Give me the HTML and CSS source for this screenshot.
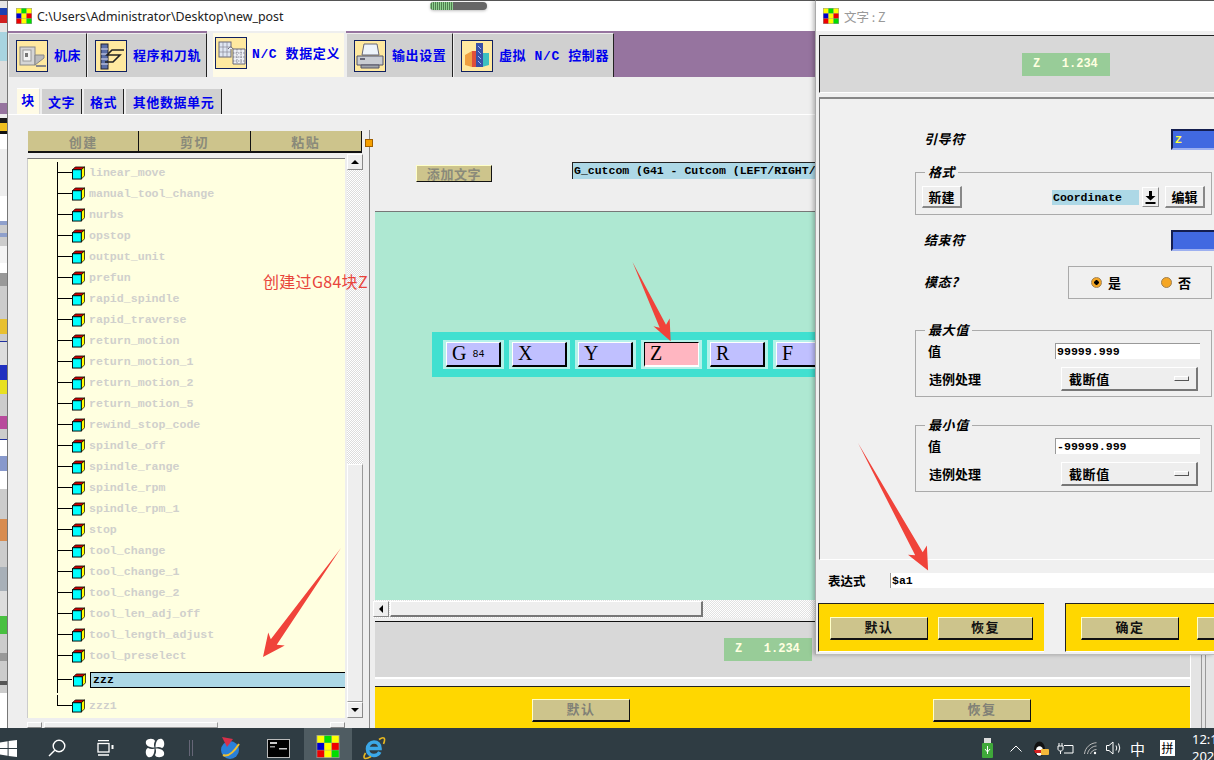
FILE: index.html
```html
<!DOCTYPE html>
<html lang="zh">

<head>
    <meta charset="UTF-8">
    <title>new_post</title>
    <link rel="stylesheet" href="styles.css">
</head>

<body>
    <svg class="defs" width="0" height="0">
        <symbol id="logo" viewBox="0 0 15 15">
            <rect width="15" height="15" fill="#999" />
            <rect x="0.5" y="0.5" width="4.5" height="4.5" fill="#ff0" />
            <rect x="5.2" y="0.5" width="4.5" height="4.5" fill="#0d0" />
            <rect x="10" y="0.5" width="4.5" height="4.5" fill="#ff0" />
            <rect x="0.5" y="5.2" width="4.5" height="4.5" fill="#00c" />
            <rect x="5.2" y="5.2" width="4.5" height="4.5" fill="#ff0" />
            <rect x="10" y="5.2" width="4.5" height="4.5" fill="#e00" />
            <rect x="0.5" y="10" width="4.5" height="4.5" fill="#e00" />
            <rect x="5.2" y="10" width="4.5" height="4.5" fill="#ff0" />
            <rect x="10" y="10" width="4.5" height="4.5" fill="#0d0" />
        </symbol>
        <symbol id="cube" viewBox="0 0 14 14">
            <path d="M0.5 3.5 L3.5 0.5 H13.5 L10 3.5 Z" fill="#c00" stroke="#000" stroke-width="0.8" />
            <path d="M10 3.5 L13.5 0.5 V10 L10 13.5 Z" fill="#ff0" stroke="#000" stroke-width="0.8" />
            <rect x="0.5" y="3.5" width="9.5" height="10" fill="#0ff" stroke="#000" />
        </symbol>
    </svg>

    <div class="desktop">
        <div class="strip"></div>

        <div class="main-window">
            <div class="titlebar">
                <svg class="title-logo"><use href="#logo" /></svg>
                <span class="title-text">C:\Users\Administrator\Desktop\new_post</span>
            </div>

            <div class="tabs">
                <div class="tab">
                    <svg class="tab-icon" viewBox="0 0 30 30">
                        <rect x="3" y="6" width="15" height="18" fill="#d5d5d5" stroke="#888" />
                        <rect x="6" y="9" width="8" height="11" fill="#f4f4f4" stroke="#999" />
                        <rect x="8" y="12" width="3" height="4" fill="#777" />
                        <path d="M18 14 L27 14 L27 17 L18 24 Z" fill="#bbb" stroke="#888" />
                        <path d="M19 25 H29" stroke="#888" stroke-width="2" />
                    </svg>
                    <span>机床</span>
                </div>
                <div class="tab">
                    <svg class="tab-icon" viewBox="0 0 30 30">
                        <rect x="5" y="3" width="7" height="25" fill="#5a6ea8" stroke="#223" />
                        <path d="M5 8 H12 M5 13 H12 M5 18 H12 M5 23 H12" stroke="#dde" />
                        <path d="M28 9 H16 L11 14 H24 L17 21 H9" fill="none" stroke="#222" stroke-width="1.6" />
                    </svg>
                    <span>程序和刀轨</span>
                </div>
                <div class="tab tab-active">
                    <svg class="tab-icon" viewBox="0 0 30 30">
                        <rect x="3" y="4" width="12" height="15" fill="#dfe6f2" stroke="#667" />
                        <path d="M3 9 H15 M3 14 H15 M7 4 V19 M11 4 V19" stroke="#889" stroke-width="0.7" />
                        <path d="M12 11 Q15 7 17 11 V26 H29 V11 H17" fill="#eef0f6" stroke="#667" />
                        <path d="M17 15 H29 M17 19 H29 M17 23 H29 M21 11 V26 M25 11 V26" stroke="#667" stroke-width="0.7" stroke-dasharray="1.5 1" />
                    </svg>
                    <span>N/C 数据定义</span>
                </div>
                <div class="tab">
                    <svg class="tab-icon" viewBox="0 0 30 30">
                        <path d="M9 3 H22 L24 14 H7 Z" fill="#eef4fa" stroke="#667" />
                        <path d="M2 15 H28 V24 H2 Z" fill="#c9ccd2" stroke="#556" />
                        <path d="M6 24 H24 V27 H6 Z" fill="#9fa3aa" stroke="#556" />
                        <rect x="5" y="17" width="5" height="2" fill="#667" />
                    </svg>
                    <span>输出设置</span>
                </div>
                <div class="tab">
                    <svg class="tab-icon" viewBox="0 0 30 30">
                        <path d="M3 14 L10 10 V26 L3 24 Z" fill="#f0a040" />
                        <path d="M10 10 H16 V26 H10 Z" fill="#e0503a" />
                        <path d="M20 12 L27 12 V24 L20 26 Z" fill="#3cc0c0" />
                        <rect x="14" y="2" width="7" height="24" fill="#3850a8" />
                        <path d="M16 5 L19 8 M16 10 L19 13 M16 15 L19 18 M16 20 L19 23" stroke="#9fb4ff" />
                    </svg>
                    <span>虚拟 N/C 控制器</span>
                </div>
            </div>

            <div class="win-body">
                <div class="subtabs">
                    <div class="subtab subtab-active">块</div>
                    <div class="subtab w40">文字</div>
                    <div class="subtab w40">格式</div>
                    <div class="subtab w96">其他数据单元</div>
                </div>

                <div class="workspace">
                    <div class="left-col">
                        <div class="tree-buttons">
                            <div class="khaki-btn">创建</div>
                            <div class="khaki-btn">剪切</div>
                            <div class="khaki-btn">粘贴</div>
                        </div>
                        <div class="tree-wrap">
                            <div class="tree">
                                <ul class="tree-list">
                                    <li class="tree-row"><svg class="cube"><use href="#cube" /></svg><span>linear_move</span></li>
                                    <li class="tree-row"><svg class="cube"><use href="#cube" /></svg><span>manual_tool_change</span></li>
                                    <li class="tree-row"><svg class="cube"><use href="#cube" /></svg><span>nurbs</span></li>
                                    <li class="tree-row"><svg class="cube"><use href="#cube" /></svg><span>opstop</span></li>
                                    <li class="tree-row"><svg class="cube"><use href="#cube" /></svg><span>output_unit</span></li>
                                    <li class="tree-row"><svg class="cube"><use href="#cube" /></svg><span>prefun</span></li>
                                    <li class="tree-row"><svg class="cube"><use href="#cube" /></svg><span>rapid_spindle</span></li>
                                    <li class="tree-row"><svg class="cube"><use href="#cube" /></svg><span>rapid_traverse</span></li>
                                    <li class="tree-row"><svg class="cube"><use href="#cube" /></svg><span>return_motion</span></li>
                                    <li class="tree-row"><svg class="cube"><use href="#cube" /></svg><span>return_motion_1</span></li>
                                    <li class="tree-row"><svg class="cube"><use href="#cube" /></svg><span>return_motion_2</span></li>
                                    <li class="tree-row"><svg class="cube"><use href="#cube" /></svg><span>return_motion_5</span></li>
                                    <li class="tree-row"><svg class="cube"><use href="#cube" /></svg><span>rewind_stop_code</span></li>
                                    <li class="tree-row"><svg class="cube"><use href="#cube" /></svg><span>spindle_off</span></li>
                                    <li class="tree-row"><svg class="cube"><use href="#cube" /></svg><span>spindle_range</span></li>
                                    <li class="tree-row"><svg class="cube"><use href="#cube" /></svg><span>spindle_rpm</span></li>
                                    <li class="tree-row"><svg class="cube"><use href="#cube" /></svg><span>spindle_rpm_1</span></li>
                                    <li class="tree-row"><svg class="cube"><use href="#cube" /></svg><span>stop</span></li>
                                    <li class="tree-row"><svg class="cube"><use href="#cube" /></svg><span>tool_change</span></li>
                                    <li class="tree-row"><svg class="cube"><use href="#cube" /></svg><span>tool_change_1</span></li>
                                    <li class="tree-row"><svg class="cube"><use href="#cube" /></svg><span>tool_change_2</span></li>
                                    <li class="tree-row"><svg class="cube"><use href="#cube" /></svg><span>tool_len_adj_off</span></li>
                                    <li class="tree-row"><svg class="cube"><use href="#cube" /></svg><span>tool_length_adjust</span></li>
                                    <li class="tree-row"><svg class="cube"><use href="#cube" /></svg><span>tool_preselect</span></li>
                                    <li class="tree-row tree-selected"><svg class="cube"><use href="#cube" /></svg><span>zzz</span></li>
                                    <li class="tree-row tree-last"><svg class="cube"><use href="#cube" /></svg><span>zzz1</span></li>
                                </ul>
                            </div>
                            <div class="vscroll">
                                <div class="scroll-btn"><i class="arrow-up"></i></div>
                                <div class="vscroll-track"></div>
                                <div class="vscroll-thumb"></div>
                                <div class="scroll-btn"><i class="arrow-down"></i></div>
                            </div>
                        </div>
                        <div class="tree-hscroll">
                            <div class="scroll-btn small"></div>
                            <div class="tree-hthumb"></div>
                            <div class="scroll-btn small"></div>
                        </div>
                    </div>

                    <div class="right-col">
                        <span class="sash-handle"></span>
                        <div class="tool-row">
                            <div class="add-word">添加文字</div>
                            <div class="block-desc">G_cutcom (G41 - Cutcom (LEFT/RIGHT/</div>
                        </div>
                        <div class="canvas">
                            <div class="block-bar">
                                <div class="cell"><div class="word">G<small>84</small></div></div>
                                <div class="cell"><div class="word">X</div></div>
                                <div class="cell"><div class="word">Y</div></div>
                                <div class="cell"><div class="word word-on">Z</div></div>
                                <div class="cell"><div class="word">R</div></div>
                                <div class="cell"><div class="word">F</div></div>
                            </div>
                        </div>
                        <div class="hscroll">
                            <div class="scroll-btn"><i class="arrow-left"></i></div>
                            <div class="hscroll-thumb"></div>
                        </div>
                        <div class="preview-main">
                            <div class="word-tag">Z   1.234</div>
                        </div>
                        <div class="yellow-main">
                            <div class="khaki-btn raised off">默认</div>
                            <div class="khaki-btn raised off">恢复</div>
                        </div>
                        <div class="edge"></div>
                    </div>
                </div>
            </div>
        </div>
    </div>

    <div class="taskbar">
        <div class="tb-cell tb-start">
            <svg width="17" height="17" viewBox="0 0 17 17" fill="#fff">
                <path d="M0 2.4 L7.6 1.2 V8 H0 Z M8.6 1 L17 0 V8 H8.6 Z M0 9 H7.6 V15.8 L0 14.6 Z M8.6 9 H17 V17 L8.6 16 Z" />
            </svg>
        </div>
        <div class="tb-cell">
            <svg width="18" height="18" viewBox="0 0 18 18" fill="none" stroke="#fff" stroke-width="1.4">
                <circle cx="11" cy="7" r="5.8" /><path d="M6.8 11.2 L1 17" />
            </svg>
        </div>
        <div class="tb-cell">
            <svg width="17" height="16" viewBox="0 0 17 16" fill="none" stroke="#fff" stroke-width="1.3">
                <rect x="1" y="3.5" width="11" height="8.5" /><path d="M1 0.7 H12 M1 15 H12" /><rect x="14.5" y="5" width="2" height="4" fill="#fff" stroke="none" />
            </svg>
        </div>
        <div class="tb-cell tb-fan">
            <svg width="20" height="20" viewBox="0 0 20 20" fill="#fff">
                <path d="M9.500 9.500 C3 9.500 0 7 1 3 C3 0 9 0 10 3 C9 5 8.500 7 9.500 9.500 Z" />
                <path d="M10.500 9.500 C10.500 3 13 0 17 1 C20 3 20 9 17 10 C15 9 13 8.500 10.500 9.500 Z" />
                <path d="M10.500 10.500 C17 10.500 20 13 19 17 C17 20 11 20 10 17 C11 15 11.500 13 10.500 10.500 Z" />
                <path d="M9.500 10.500 C9.500 17 7 20 3 19 C0 17 0 11 3 10 C5 11 7 11.500 9.500 10.500 Z" />
            </svg>
        </div>
        <div class="tb-sep"></div>
        <div class="tb-cell">
            <svg width="24" height="24" viewBox="0 0 24 24">
                <circle cx="12" cy="14" r="9" fill="#2a80d8" />
                <path d="M5 19 Q12 22 21 8" fill="none" stroke="#f0c030" stroke-width="2" />
                <path d="M4 1 L15 3 L9 11 Z" fill="#d8304a" />
            </svg>
        </div>
        <div class="tb-cell">
            <svg width="23" height="19" viewBox="0 0 23 19">
                <rect x="0.5" y="0.5" width="22" height="18" fill="#000" stroke="#bbb" />
                <rect x="3" y="3" width="7" height="2" fill="#ccc" /><rect x="12" y="9" width="8" height="1.5" fill="#ccc" /><rect x="3" y="7" width="5" height="1.5" fill="#999" />
            </svg>
        </div>
        <div class="tb-cell tb-active"><svg class="tb-logo"><use href="#logo" /></svg></div>
        <div class="tb-cell">
            <svg width="24" height="24" viewBox="0 0 24 24" fill="none">
                <path d="M6.500 12.500 H18 C18 8.500 15.500 6 12 6 C8.500 6 5.500 9 5.500 13 C5.500 17.500 8.500 19.500 12 19.500 C14.500 19.500 16.500 18.500 17.800 16" stroke="#3ba8e8" stroke-width="3.600" />
                <path d="M3.500 17 C0 23 3 24 9 20.500 M17 3.500 C22 0 24 2 21.500 8" stroke="#e8b820" stroke-width="1.600" />
            </svg>
        </div>

        <div class="tray">
            <svg class="tray-usb" width="11" height="20" viewBox="0 0 11 20">
                <rect x="2" y="0" width="7" height="5" fill="#ddd" /><rect y="5" width="11" height="15" rx="1" fill="#3fa83a" />
                <path d="M5.5 8 V16 M3 11 L5.5 14 L8 11" stroke="#fff" fill="none" />
            </svg>
            <svg class="tray-chevron" width="12" height="7" viewBox="0 0 12 7" fill="none" stroke="#fff"><path d="M0.5 6.5 L6 1 L11.5 6.5" /></svg>
            <svg class="tray-qq" width="16" height="17" viewBox="0 0 16 17">
                <ellipse cx="6.5" cy="9" rx="5.5" ry="7.5" fill="#111" />
                <ellipse cx="6.5" cy="11" rx="3.6" ry="4.8" fill="#fff" />
                <path d="M1 10 H11 L9 13 H2 Z" fill="#d42020" />
                <rect x="8" y="9" width="8" height="6" rx="1" fill="#f5b83a" />
            </svg>
            <svg class="tray-plug" width="17" height="13" viewBox="0 0 17 13" fill="none" stroke="#fff">
                <path d="M7 3.5 H16 V11 H7 M2 1 V4 M5 1 V4 M1 4 H6 V7 C6 8 5 9 3.500 9 C2 9 1 8 1 7 Z M3.500 9 V12" />
            </svg>
            <svg class="tray-wifi" width="13" height="13" viewBox="0 0 13 13" fill="none" stroke="#bbb">
                <path d="M0.500 12 C1 6 6 1 12.500 0.700 M3.500 12 C4 8 8 4 12.500 4 M6.500 12 C7 10 9 7.500 12.500 7.500" /><circle cx="11" cy="11" r="1.200" fill="#fff" stroke="none" />
            </svg>
            <svg class="tray-sound" width="17" height="14" viewBox="0 0 17 14" fill="none" stroke="#fff">
                <path d="M0.500 4.500 H3 L7 1 V13 L3 9.500 H0.500 Z M10 4.500 Q11.500 7 10 9.500 M12.500 2.500 Q15 7 12.500 11.500" />
            </svg>
            <span class="tray-ime">中</span>
            <span class="tray-pin">拼</span>
            <div class="clock"><span>12:1</span><span>202</span></div>
        </div>
    </div>

    <div class="dialog">
        <div class="titlebar dialog-title">
            <svg class="title-logo"><use href="#logo" /></svg>
            <span class="dialog-title-text">文字 : Z</span>
        </div>
        <div class="dialog-preview">
            <div class="word-tag">Z   1.234</div>
        </div>
        <div class="dialog-form">
            <div class="form-row mt30">
                <span class="it-label">引导符</span>
                <div class="blue-input">Z</div>
            </div>
            <fieldset class="group mt14">
                <legend class="it-label">格式</legend>
                <div class="format-row">
                    <div class="gray-btn">新建</div>
                    <div class="format-name">Coordinate</div>
                    <div class="format-arrow"><svg width="11" height="13" viewBox="0 0 11 13"><path d="M4 0 H7 V5 H10.500 L5.500 9.500 L0.500 5 H4 Z M0.500 11 H10.500 V13 H0.500 Z" /></svg></div>
                    <div class="gray-btn edit-btn">编辑</div>
                </div>
            </fieldset>
            <div class="form-row mt15">
                <span class="it-label">结束符</span>
                <div class="blue-input"></div>
            </div>
            <div class="form-row modal-row">
                <span class="it-label">模态?</span>
                <div class="radio-box">
                    <span class="radio radio-on"></span><span class="radio-text">是</span>
                    <span class="radio radio-second"></span><span class="radio-text">否</span>
                </div>
            </div>
            <fieldset class="group mt23">
                <legend class="it-label">最大值</legend>
                <div class="value-row">
                    <span class="value-label">值</span>
                    <div class="value-input">99999.999</div>
                </div>
                <div class="rule-row">
                    <span class="rule-label">违例处理</span>
                    <div class="rule-select"><span>截断值</span><i class="rule-mark"></i></div>
                </div>
            </fieldset>
            <fieldset class="group mt20">
                <legend class="it-label">最小值</legend>
                <div class="value-row">
                    <span class="value-label">值</span>
                    <div class="value-input">-99999.999</div>
                </div>
                <div class="rule-row">
                    <span class="rule-label">违例处理</span>
                    <div class="rule-select"><span>截断值</span><i class="rule-mark"></i></div>
                </div>
            </fieldset>
        </div>
        <div class="expr-row">
            <span class="expr-label">表达式</span>
            <div class="expr-input">$a1</div>
        </div>
        <div class="dialog-actions">
            <div class="yellow-box box-left">
                <div class="khaki-btn raised w98">默认</div>
                <div class="khaki-btn raised w95">恢复</div>
            </div>
            <div class="yellow-box box-right">
                <div class="khaki-btn raised w98">确定</div>
                <div class="khaki-btn raised w98"></div>
            </div>
        </div>
    </div>

    <!-- remote desktop pill + hand drawn notes on top of the screenshot -->
    <div class="rdp-pill"><i></i></div>
    <div class="note">创建过G84块Z</div>
    <svg class="arrows" width="1214" height="760" fill="#f0433a">
        <polygon transform="translate(341 548) rotate(125.6)" points="0,0 116,-4 112,-11 134,0 111,10 115,4" />
        <polygon transform="translate(632.500 262) rotate(64.3)" points="0,0 71,-3 67,-9 88,0 67,9 71,4" />
        <polygon transform="translate(858 443) rotate(61.2)" points="0,0 127,-4 123,-11 145.500,0 122,10 126,4" />
    </svg>
</body>

</html>
```

FILE: styles.css
```css
* {
    box-sizing: border-box;
}

html,
body {
    margin: 0;
    width: 1214px;
    height: 760px;
    overflow: hidden;
}

body {
    position: relative;
    display: flex;
    flex-direction: column;
    font-family: "Noto Sans CJK SC", sans-serif;
    font-size: 13px;
    font-weight: 700;
    color: #000;
    background-color: #eee;
}

.defs {
    position: absolute;
}

.desktop {
    display: flex;
    height: 728px;
    border-top: 1px solid #555;
    overflow: hidden;
}

.strip {
    width: 8px;
    flex: none;
    border-right: 1px solid #777;
    background: linear-gradient(#e6e6e6 0 7px, #1c3fb0 7px 14px, #d02020 14px 22px, #e6e6e6 22px 31px,
            #a8d4e0 31px 60px, #dedede 60px 102px, #96749f 102px 113px, #eee 113px 117px,
            #1a1a1a 117px 122px, #f0c020 122px 130px, #111 130px 133px, #fff 133px 148px,
            #eee 148px 195px, #fff 195px 220px, #8fa0cc 220px 224px, #ccc 224px 232px, #8fa0cc 232px 236px,
            #ccc 236px 245px, #f4f4f4 245px 262px, #fff 262px 272px, #999 272px 285px, #ccc 285px 318px,
            #e8c030 318px 333px, #ccc 333px 340px, #2030a0 340px 341px, #ddd 341px 364px, #2030c0 364px 379px,
            #e8e020 379px 393px, #ccc 393px 415px, #b84a9c 415px 428px, #ccc 428px 438px, #2030a0 438px 439px,
            #fff 439px 455px, #8899cc 455px 470px, #fff 470px 488px, #ccc 488px 518px, #d88c50 518px 540px,
            #ccc 540px 566px, #a8b0b8 566px 590px, #ddd 590px 615px, #48c040 615px 633px, #ccc 633px 652px,
            #999 652px 660px, #ccc 660px 680px, #555 680px 684px, #ccc 684px 692px, #fff 692px);
}

/* main window */
.main-window {
    flex: 1;
    display: flex;
    flex-direction: column;
    min-width: 0;
}

.titlebar {
    height: 30px;
    flex: none;
    display: flex;
    align-items: center;
    background-color: #fff;
}

.title-logo {
    width: 16px;
    height: 16px;
    margin-left: 8px;
    flex: none;
}

.title-text {
    margin-left: 5px;
    font-family: "Noto Sans", sans-serif;
    font-size: 12.4px;
    font-weight: 400;
    color: #222;
}

.tabs {
    height: 46px;
    flex: none;
    display: grid;
    grid-template-columns: 79px 120px 139px 107px 161px;
    justify-content: start;
    background-color: #96749f;
}

.tab {
    display: flex;
    align-items: center;
    gap: 6px;
    margin-top: 2px;
    padding-left: 7px;
    background-color: #d0d0d0;
    border-top: 1px solid #eee;
    border-left: 1px solid #eee;
    border-right: 1px solid #222;
    font-family: "Liberation Mono", "Noto Sans CJK SC", monospace;
    font-size: 13px;
    letter-spacing: 0.6px;
    color: #0000ee;
    white-space: nowrap;
}

.tab span {
    margin-bottom: 3px;
}

.tab-active {
    margin-top: 0;
    padding: 4px 2px 0 2px;
    align-items: flex-start;
    background-color: #fffbe6;
    border: 1px solid #eee;
    border-width: 2px 2px 0 6px;
    gap: 5px;
}

.tab-active span {
    margin: 6px 0 0;
}

.tab-icon {
    width: 32px;
    height: 32px;
    flex: none;
    margin-top: 1px;
    background-color: #ffe9a0;
    border: 1px solid #102060;
}

.tab-active .tab-icon {
    margin-top: 0;
}

.win-body {
    flex: 1;
    display: flex;
    flex-direction: column;
    min-height: 0;
    background-color: #eee;
}

.subtabs {
    height: 38px;
    flex: none;
    display: flex;
    align-items: flex-end;
    gap: 2px;
    padding-left: 9px;
    border-bottom: 1px solid #fff;
}

.subtab {
    height: 25px;
    display: flex;
    align-items: center;
    justify-content: center;
    background-color: #d0d0d0;
    border-right: 1px solid #222;
    font-size: 13px;
    letter-spacing: 0.6px;
    color: #0000ee;
    white-space: nowrap;
}

.subtab-active {
    width: 23px;
    height: 26px;
    padding-bottom: 5px;
    background-color: #fffbe6;
    border-right: 1px solid #ddd;
    border-top: 1px solid #fff;
}

.w40 {
    width: 40px;
}

.w96 {
    width: 96px;
}

.workspace {
    flex: 1;
    display: flex;
    min-height: 0;
    overflow: hidden;
}

/* block tree */
.left-col {
    width: 361px;
    flex: none;
    padding: 16px 0 0 19px;
}

.tree-buttons {
    display: grid;
    grid-template-columns: repeat(3, 1fr);
    width: 334px;
    height: 22px;
    margin-left: 1px;
}

.khaki-btn {
    display: flex;
    align-items: center;
    justify-content: center;
    background-color: #cdc48c;
    border-right: 1px solid #111;
    border-bottom: 2px solid #111;
    font-size: 13px;
    letter-spacing: 1.5px;
    color: #8a8a7a;
}

.raised {
    height: 23px;
    padding-bottom: 3px;
    border-top: 1px solid #ffffc8;
    border-left: 1px solid #ffffc8;
    color: #111;
}

.off {
    width: 98px;
    color: #808076;
}

.tree-wrap {
    display: flex;
    height: 568px;
    margin-top: 1px;
}

.tree {
    width: 318px;
    height: 560px;
    margin-top: 4px;
    padding-top: 3px;
    background-color: #ffffe0;
    border-top: 1px solid #777;
    border-left: 1px solid #ccc;
    overflow: hidden;
}

.tree-list {
    list-style: none;
    margin: 0 0 0 29px;
    padding: 0;
}

.tree-row {
    height: 21px;
    display: flex;
    align-items: center;
    padding-left: 15px;
    background:
        linear-gradient(#000, #000) 0 0 / 1px 100% no-repeat,
        linear-gradient(#000, #000) 0 50% / 15px 1px no-repeat;
    font-family: "Liberation Mono", monospace;
    font-size: 11.6px;
    color: #d0d0cc;
}

.tree-row span {
    margin-left: 4px;
    white-space: nowrap;
}

.cube {
    width: 13px;
    height: 14px;
    flex: none;
}

.tree-selected {
    height: 27px;
    margin-bottom: 2px;
    padding-left: 16px;
    color: #000;
}

.tree-selected span {
    flex: 1;
    height: 16px;
    margin-left: 4px;
    padding-left: 2px;
    margin-right: 0;
    line-height: 14px;
    background-color: #add8e6;
    border: 1px solid #000;
    border-right: 0;
}

.tree-last {
    background:
        linear-gradient(#000, #000) 0 0 / 1px 50% no-repeat,
        linear-gradient(#000, #000) 0 50% / 15px 1px no-repeat;
}

.vscroll {
    width: 16px;
    margin-left: 2px;
    display: flex;
    flex-direction: column;
}

.scroll-btn {
    width: 16px;
    height: 16px;
    flex: none;
    display: flex;
    align-items: center;
    justify-content: center;
    background-color: #eee;
    border: 1px solid;
    border-color: #fff #888 #888 #fff;
}

.scroll-btn.small {
    width: 15px;
    height: 6px;
}

.arrow-up,
.arrow-down {
    border-left: 4px solid transparent;
    border-right: 4px solid transparent;
}

.arrow-up {
    border-bottom: 4px solid #000;
}

.arrow-down {
    border-top: 4px solid #000;
}

.arrow-left {
    border-top: 4px solid transparent;
    border-bottom: 4px solid transparent;
    border-right: 4px solid #000;
}

.vscroll-track {
    height: 294px;
    background: repeating-conic-gradient(#fff 0 25%, #dcdcdc 0 50%) 0 0 / 2px 2px;
}

.vscroll-thumb {
    height: 238px;
    background-color: #eee;
    border: 1px solid;
    border-color: #fff #999 #999 #fff;
}

.tree-hscroll {
    display: flex;
    width: 318px;
    height: 6px;
    margin-top: 0;
}

.tree-hthumb {
    width: 174px;
    margin: 0 auto 0 2px;
    background-color: #eee;
    border: 1px solid;
    border-color: #fff #999 #999 #fff;
}

/* block editor */
.right-col {
    position: relative;
    flex: 1;
    min-width: 0;
    margin-top: 15px;
    padding: 0 24px 0 5px;
    border-left: 1px solid #888;
}

.sash-handle {
    position: absolute;
    left: -5px;
    top: 9px;
    width: 8px;
    height: 8px;
    background-color: #f5a000;
    border: 1px solid #a06000;
}

.tool-row {
    height: 81px;
    display: flex;
    align-items: flex-start;
    padding: 32px 0 0 41px;
    overflow: hidden;
}

.add-word {
    width: 76px;
    height: 17px;
    margin-top: 3px;
    padding-bottom: 1px;
    display: flex;
    align-items: center;
    justify-content: center;
    background-color: #cdc48c;
    border: 1px solid;
    border-color: #ffffc8 #111 #111 #ffffc8;
    font-size: 13px;
    letter-spacing: 0.6px;
    color: #8a8a7a;
}

.block-desc {
    margin-left: 80px;
    width: 300px;
    height: 17px;
    flex: none;
    padding-left: 1px;
    background-color: #add8e6;
    border-top: 1px solid #222;
    border-left: 1px solid #222;
    font-family: "Liberation Mono", monospace;
    font-size: 11.5px;
    line-height: 15px;
    white-space: pre;
}

.canvas {
    height: 389px;
    padding: 120px 0 0 57px;
    background-color: #aee8d2;
    border-top: 1px solid #777;
}

.block-bar {
    display: inline-flex;
    gap: 5px;
    width: 500px;
    height: 45px;
    padding: 8px 11px;
    background-color: #40e0d0;
}

.cell {
    width: 61px;
    height: 29px;
    padding: 2px 3px;
    background-color: #b4f2ea;
}

.word {
    height: 25px;
    padding-left: 5px;
    background-color: #c0c0ff;
    border: 1px solid;
    border-color: #fff #000 #000 #fff;
    border-width: 1px 2px 2px 1px;
    font-family: "Liberation Serif", serif;
    font-size: 20px;
    font-weight: 400;
    line-height: 21px;
}

.word small {
    margin-left: 6px;
    font-family: "Liberation Mono", monospace;
    font-size: 10px;
    vertical-align: 3px;
}

.word-on {
    background-color: #ffb6c1;
    border-color: #000 #fff #fff #000;
    border-width: 1px 1px 2px 1px;
}

.hscroll {
    display: flex;
    height: 18px;
    margin-left: -2px;
    padding-top: 1px;
    background: repeating-conic-gradient(#fff 0 25%, #e2e2e2 0 50%) 0 0 / 2px 2px;
}

.hscroll-thumb {
    width: 313px;
    height: 16px;
    margin-left: 1px;
    background-color: #eee;
    border: 1px solid;
    border-color: #fff #777 #777 #fff;
    border-width: 1px 2px 2px 1px;
}

.preview-main {
    height: 58px;
    margin-top: 3px;
    padding-left: 349px;
    display: flex;
    align-items: center;
    background-color: #d8d8d8;
    border-top: 1px solid #111;
    border-bottom: 2px solid #fff;
}

.word-tag {
    width: 88px;
    height: 23px;
    padding-left: 11px;
    background-color: #98cc98;
    font-family: "Liberation Mono", monospace;
    font-size: 12px;
    line-height: 23px;
    color: #ffffe0;
    white-space: pre;
}

.yellow-main {
    height: 60px;
    margin-top: 7px;
    padding: 12px 0 0 157px;
    display: flex;
    gap: 303px;
    background-color: #ffd700;
    border-top: 1px solid #222;
}

.edge {
    position: absolute;
    right: 0;
    top: 490px;
    bottom: 0;
    width: 24px;
    border-left: 1px solid #fff;
    background: linear-gradient(#999, #999) 10px 0 / 1px 100% no-repeat,
        linear-gradient(#999, #999) 14px 0 / 1px 100% no-repeat, #e4e4e4;
}

/* word dialog */
.dialog {
    position: absolute;
    left: 815px;
    top: 0;
    width: 399px;
    height: 655px;
    display: flex;
    flex-direction: column;
    background-color: #f0f0f0;
    border-top: 1px solid #555;
    border-left: 1px solid #aaa;
    border-bottom: 1px solid #bbb;
    box-shadow: -2px 0 4px rgba(0, 0, 0, 0.25);
}

.dialog-title .title-logo {
    margin-left: 7px;
}

.dialog-title-text {
    margin-left: 5px;
    font-family: "Noto Sans CJK SC", sans-serif;
    font-size: 12.5px;
    font-weight: 400;
    color: #999;
}

.dialog-preview {
    height: 58px;
    flex: none;
    margin: 4px 0 0 3px;
    padding-left: 202px;
    display: flex;
    align-items: center;
    background-color: #d8d8d8;
    border-top: 1px solid #222;
    border-left: 1px solid #222;
    border-bottom: 1px solid #fff;
}

.dialog-form {
    height: 463px;
    flex: none;
    margin: 4px 0 0 3px;
    border-top: 2px solid #888;
    border-left: 1px solid #777;
    border-bottom: 1px solid #fff;
    display: flex;
    flex-direction: column;
}

.mt30 {
    margin-top: 30px;
}

.mt14 {
    margin-top: 14px;
}

.mt15 {
    margin-top: 15px;
}

.mt23 {
    margin-top: 23px;
}

.mt20 {
    margin-top: 20px;
}

.form-row {
    height: 21px;
    flex: none;
    display: flex;
    align-items: center;
    justify-content: space-between;
    padding-left: 104px;
}

.it-label {
    margin-bottom: 2px;
    font-style: italic;
    font-size: 13px;
    letter-spacing: 0.6px;
    line-height: 16px;
}

.blue-input {
    width: 43px;
    height: 21px;
    padding: 0 0 0 2px;
    background-color: #4169e1;
    border-top: 2px solid #141e50;
    border-left: 2px solid #141e50;
    border-bottom: 2px solid #9db0f0;
    font-family: "Liberation Mono", monospace;
    font-size: 11.5px;
    line-height: 17px;
    color: #ffff40;
}

.group {
    width: 297px;
    flex: none;
    min-width: 0;
    margin-left: 95px;
    margin-right: 0;
    margin-bottom: 0;
    padding: 0;
    border: 1px solid #aaa;
}

.group legend {
    height: 16px;
    margin-left: 9px;
    margin-bottom: 0;
    padding: 0 3px;
}

.format-row {
    display: flex;
    align-items: center;
    padding: 6px 0 6px 6px;
}

.gray-btn {
    width: 40px;
    height: 22px;
    flex: none;
    display: flex;
    align-items: center;
    justify-content: center;
    padding-bottom: 1px;
    background-color: #eee;
    border: 1px solid;
    border-color: #fff #888 #888 #fff;
    border-width: 1px 2px 2px 1px;
    font-size: 13px;
}

.edit-btn {
    margin-left: 6px;
}

.format-name {
    width: 87px;
    height: 15px;
    margin-left: 90px;
    padding-left: 1px;
    background-color: #add8e6;
    font-family: "Liberation Mono", monospace;
    font-size: 11.5px;
    line-height: 15px;
}

.format-arrow {
    width: 17px;
    height: 20px;
    margin-left: 3px;
    display: flex;
    align-items: center;
    justify-content: center;
    background-color: #eee;
    border: 1px solid;
    border-color: #fff #888 #888 #fff;
}

.modal-row {
    height: 33px;
    margin-top: 15px;
    padding-right: 2px;
}

.radio-box {
    width: 144px;
    height: 33px;
    display: flex;
    align-items: center;
    padding-left: 22px;
    border: 1px solid #aaa;
    font-weight: 400;
}

.radio {
    width: 11px;
    height: 11px;
    flex: none;
    border-radius: 50%;
    background-color: #f5a623;
    border: 1px solid #a08050;
}

.radio-on {
    background: radial-gradient(circle, #000 0 2px, #f5a623 2.5px);
}

.radio-second {
    margin-left: 40px;
}

.radio-text {
    margin-left: 6px;
    margin-bottom: 1px;
    font-size: 13px;
    font-weight: 700;
}

.value-row {
    display: flex;
    align-items: center;
    height: 16px;
    margin-top: 5px;
    padding-left: 12px;
}

.value-label {
    width: 127px;
    flex: none;
    margin-bottom: 2px;
}

.value-input {
    width: 145px;
    height: 16px;
    padding-left: 1px;
    background-color: #fff;
    border-top: 1px solid #999;
    border-left: 1px solid #999;
    font-family: "Liberation Mono", monospace;
    font-size: 11.6px;
    line-height: 15px;
}

.rule-row {
    display: flex;
    align-items: center;
    height: 24px;
    margin: 8px 0 5px;
    padding-left: 13px;
}

.rule-label {
    width: 132px;
    flex: none;
    margin-bottom: 2px;
}

.rule-select {
    width: 137px;
    height: 24px;
    display: flex;
    align-items: center;
    justify-content: space-between;
    padding: 0 7px 0 7px;
    background-color: #eee;
    border: 1px solid;
    border-color: #fff #777 #777 #fff;
    border-width: 1px 2px 2px 1px;
    letter-spacing: 0.6px;
}

.rule-select span {
    margin-bottom: 1px;
}

.rule-mark {
    width: 15px;
    height: 5px;
    background-color: #eee;
    border: 1px solid;
    border-color: #fff #555 #555 #fff;
}

.expr-row {
    height: 43px;
    flex: none;
    display: flex;
    align-items: center;
    padding-left: 12px;
    font-size: 12.5px;
}

.expr-label {
    width: 62px;
    flex: none;
    margin-bottom: 2px;
}

.expr-input {
    flex: 1;
    height: 15px;
    padding-left: 1px;
    margin-top: -2px;
    background-color: #fff;
    border-left: 1px solid #999;
    font-family: "Liberation Mono", monospace;
    font-size: 11.5px;
    line-height: 15px;
}

.dialog-actions {
    height: 49px;
    flex: none;
    display: flex;
    gap: 21px;
    padding-left: 2px;
}

.yellow-box {
    height: 49px;
    display: flex;
    padding-top: 13px;
    background-color: #ffd700;
    border-top: 1px solid #222;
    border-left: 1px solid #222;
    border-bottom: 1px solid #fff;
}

.box-left {
    width: 226px;
    gap: 10px;
    padding-left: 11px;
}

.box-right {
    flex: 1;
    gap: 18px;
    padding-left: 15px;
    overflow: hidden;
}

.w98 {
    width: 98px;
    flex: none;
}

.w95 {
    width: 95px;
    flex: none;
}

/* overlays */
.rdp-pill {
    position: absolute;
    left: 430px;
    top: 2px;
    width: 57px;
    height: 8px;
    border-radius: 4px;
    background-color: #666;
    box-shadow: 0 1px 3px rgba(0, 0, 0, 0.25);
    overflow: hidden;
}

.rdp-pill i {
    display: block;
    width: 23px;
    height: 8px;
    background: repeating-linear-gradient(90deg, #8fd08f 0 1px, #4f7f4f 1px 2px);
}

.note {
    position: absolute;
    left: 263px;
    top: 270px;
    font-size: 16px;
    font-weight: 400;
    letter-spacing: 0.3px;
    line-height: 22px;
    color: #e8453c;
    white-space: nowrap;
}

.arrows {
    position: absolute;
    left: 0;
    top: 0;
    pointer-events: none;
}

/* taskbar */
.taskbar {
    height: 32px;
    flex: none;
    display: flex;
    background-color: #2f3c43;
    color: #fff;
}

.tb-cell {
    width: 48px;
    height: 32px;
    flex: none;
    display: flex;
    align-items: center;
    justify-content: center;
    padding-top: 8px;
}

.tb-start {
    width: 33px;
    justify-content: flex-start;
}

.tb-fan {
    padding-left: 4px;
}

.tb-sep {
    width: 29px;
    flex: none;
    margin: 12px 0 4px;
    background: linear-gradient(#667, #667) 12px 0 / 1px 100% no-repeat,
        linear-gradient(#667, #667) 15px 0 / 1px 100% no-repeat;
}

.tb-active {
    margin-left: 2px;
    margin-right: -2px;
    padding-top: 5px;
    background-color: #4f5c62;
}

.tb-logo {
    width: 24px;
    height: 23px;
}

.tray {
    margin-left: auto;
    display: flex;
    align-items: center;
    height: 32px;
    padding-top: 8px;
}

.tray-chevron {
    margin-left: 17px;
}

.tray-qq {
    margin-left: 11px;
}

.tray-plug {
    margin-left: 8px;
}

.tray-wifi {
    margin-left: 10px;
}

.tray-sound {
    margin-left: 9px;
}

.tray-ime {
    margin-left: 7px;
    font-size: 15px;
    font-weight: 400;
}

.tray-pin {
    margin-left: 15px;
    width: 15px;
    height: 16px;
    background-color: #fff;
    font-size: 12px;
    font-weight: 400;
    line-height: 16px;
    text-align: center;
    color: #000;
}

.clock {
    width: 22px;
    height: 32px;
    margin-top: -8px;
    margin-left: 17px;
    padding-top: 3px;
    display: flex;
    flex-direction: column;
    font-family: "Noto Sans", sans-serif;
    font-size: 13px;
    font-weight: 400;
    line-height: 17px;
    overflow: hidden;
    white-space: nowrap;
}
```
